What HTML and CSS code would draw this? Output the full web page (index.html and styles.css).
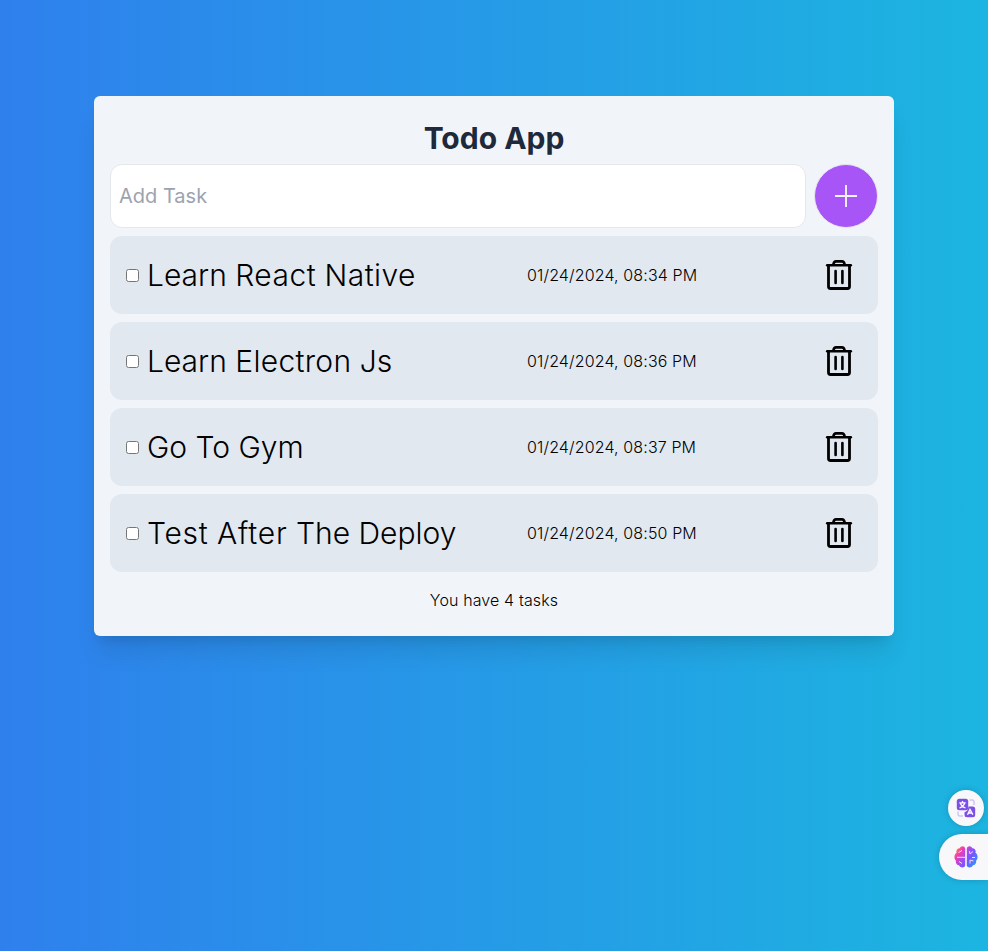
FILE: index.html
```html
<!DOCTYPE html>
<html lang="en">
<head>
<meta charset="utf-8">
<title>Todo App</title>
<link rel="stylesheet" href="styles.css">
</head>
<body>
<svg class="defs" width="0" height="0">
  <symbol id="trash" viewBox="0 0 30 32">
    <g fill="none" stroke="#000" stroke-width="2.8" stroke-linejoin="round" stroke-linecap="round">
      <path d="M3.200 6.200H26.800" stroke-width="2.500"/>
      <path d="M9.300 5.500Q10 2.400 12 2.400H18Q20 2.400 20.700 5.500" stroke-width="2.600"/>
      <path d="M4.500 6.500V27.500Q4.500 29.500 6.500 29.500H23.500Q25.500 29.500 25.500 27.500V6.500"/>
      <path d="M11.600 12V24M18.400 12V24" stroke-width="2.600"/>
    </g>
  </symbol>
</svg>
<main class="card">
  <h1 class="title">Todo App</h1>
  <form class="add">
    <input class="field" type="text" placeholder="Add Task">
    <button class="plus" type="button" aria-label="Add"><svg width="22" height="22" viewBox="0 0 22 22"><path d="M11 0V22M0 11H22" stroke="#f1f5f9" stroke-width="1.900"/></svg></button>
  </form>
  <ul class="list">
    <li class="task"><label class="name"><input class="check" type="checkbox"><span>Learn <span class="wide">React</span> <span class="wide">Native</span></span></label><span class="date">01/24/2024, 08:34 PM</span><svg class="trash"><use href="#trash"/></svg></li>
    <li class="task"><label class="name"><input class="check" type="checkbox"><span>Learn <span class="loose">Electron</span> Js</span></label><span class="date">01/24/2024, 08:36 PM</span><svg class="trash"><use href="#trash"/></svg></li>
    <li class="task"><label class="name"><input class="check" type="checkbox"><span>Go To Gym</span></label><span class="date">01/24/2024, 08:37 PM</span><svg class="trash"><use href="#trash"/></svg></li>
    <li class="task"><label class="name"><input class="check" type="checkbox"><span><span class="wider">Test</span> <span class="wider">After</span> The Deploy</span></label><span class="date">01/24/2024, 08:50 PM</span><svg class="trash"><use href="#trash"/></svg></li>
  </ul>
  <p class="count">You have 4 tasks</p>
</main>
<aside class="widgets">
  <div class="translate">
    <svg width="20" height="20" viewBox="0 0 20 20">
      <rect x=".8" y=".8" width="11.400" height="11.400" rx="2.500" fill="#7c4fe8"/>
      <path d="M6.500 2.900V4.400M3.300 4.900H9.700M8.700 5C8 7.300 6 9.200 3.500 10M4.300 5C5 7.300 7 9.200 9.500 10" stroke="#fff" stroke-width="1.300" fill="none"/>
      <path d="M12.500 8.500H16.700A2.500 2.500 0 0 1 19.200 11V16.700A2.500 2.500 0 0 1 16.700 19.200H11A2.500 2.500 0 0 1 8.500 16.700V14.200Q12 13.500 12.500 8.500Z" fill="#7c4fe8"/>
      <path d="M11.500 16.700L14 11.500L16.800 16.700M12.500 15H16" stroke="#fff" stroke-width="1.400" fill="none"/>
      <path d="M13.500 2H16A2 2 0 0 1 18 4V7M2 13.500V16A2 2 0 0 0 4 18H7" stroke="#d0c4f8" stroke-width="1.500" fill="none"/>
    </svg>
  </div>
  <div class="brain">
    <svg width="24" height="24" viewBox="0 0 24 24">
      <defs><linearGradient id="bg" x1="0" y1=".1" x2="1" y2=".75"><stop offset="0" stop-color="#ff9a2e"/><stop offset=".25" stop-color="#f23cae"/><stop offset=".5" stop-color="#9b4df5"/><stop offset=".68" stop-color="#7358ff"/><stop offset="1" stop-color="#2f95ff"/></linearGradient></defs>
      <path fill="url(#bg)" d="M11.200 3.500C10.500.5 6.500.7 5.700 3.300C3.300 3 1.700 5.500 2.600 7.700C-.2 9.200-.2 14 1.900 15.500C1.300 18.300 3 20.200 5 20.300C6.500 23.400 10.700 23 11.200 20.500ZM12.800 3.500C13.500.5 17.500.7 18.300 3.300C20.700 3 22.300 5.500 21.400 7.700C24.200 9.200 24.200 14 22.100 15.500C22.700 18.300 21 20.200 19 20.300C17.500 23.400 13.300 23 12.800 20.500Z"/>
      <path d="M4.500 7.500L8 5.500M3 12.300H11M5 16.500L8 18.500M19 6.500L16 9L15.500 6M21 12.500H18M19.500 16L16 15V18.500" stroke="#ffd9f4" stroke-width="1" fill="none"/>
    </svg>
  </div>
</aside>
</body>
</html>
```
FILE: styles.css
```css
* { box-sizing: border-box; margin: 0; padding: 0; }
body {
  min-height: 951px;
  padding: 96px 94px 0;
  background: linear-gradient(to right, #2f80ed, #1cb5e0);
  font: 300 16px/24px Inter, "Liberation Sans", sans-serif;
  color: #000;
}
.defs { position: absolute; }
.card {
  height: 540px;
  padding: 24px 16px;
  border-radius: 6px;
  background: #f1f5f9;
  box-shadow: 0 20px 25px -5px rgba(0, 0, 0, .1), 0 8px 10px -6px rgba(0, 0, 0, .1);
}
.title { font-size: 30px; line-height: 36px; font-weight: 700; text-align: center; color: #1e293b; }
.add { display: flex; gap: 8px; margin-top: 8px; }
.field {
  flex: 1;
  height: 64px;
  padding: 8px;
  border: 1px solid #e5e7eb;
  border-radius: 12px;
  background: #fff;
  font: 400 20px/28px Inter, sans-serif;
}
.field::placeholder { color: #9ca3af; }
.plus {
  display: flex;
  align-items: center;
  justify-content: center;
  width: 64px;
  height: 64px;
  border: 1px solid #e5e7eb;
  border-radius: 50%;
  background: #a855f7;
}
.list { display: grid; gap: 8px; margin-top: 8px; list-style: none; }
.task {
  display: grid;
  grid-template-columns: 401px 1fr 30px;
  align-items: center;
  height: 78px;
  padding: 0 24px 0 16px;
  border-radius: 12px;
  background: #e2e8f0;
}
.name { display: flex; align-items: center; gap: 8px; font-size: 30px; line-height: 36px; white-space: nowrap; }
.loose { letter-spacing: .3px; }
.wide { letter-spacing: .45px; }
.wider { letter-spacing: .75px; }
.date { letter-spacing: .13px; }
.check { width: 13px; height: 13px; }
.trash { width: 30px; height: 32px; }
.count { margin-top: 16px; text-align: center; letter-spacing: .12px; }
.widgets {
  position: fixed;
  right: 0;
  top: 790px;
  display: flex;
  flex-direction: column;
  align-items: flex-end;
  gap: 8px;
}
.translate, .brain { display: flex; align-items: center; background: #f8f8fb; box-shadow: 0 0 6px rgba(0, 0, 0, .18); }
.translate { justify-content: center; width: 36px; height: 36px; margin-right: 4px; border-radius: 50%; }
.brain { width: 49px; height: 46px; padding-left: 15px; border-radius: 23px 0 0 23px; }
```
